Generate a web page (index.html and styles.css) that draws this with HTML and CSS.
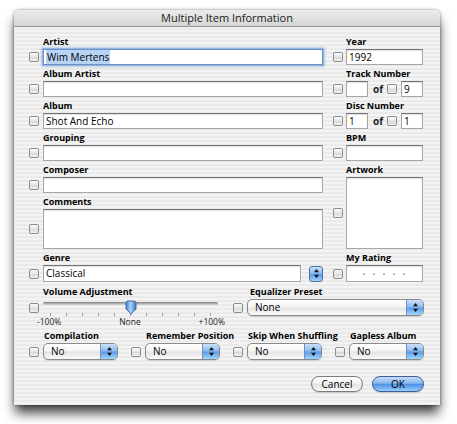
FILE: index.html
```html
<!DOCTYPE html>
<html>
<head>
<meta charset="utf-8">
<title>Multiple Item Information</title>
<link rel="stylesheet" href="styles.css">
</head>
<body>
<div class="win">
  <div class="titlebar">Multiple Item Information</div>
  <div class="content">
    <div class="cols">
      <div class="col left">
        <div class="fld"><div class="lbl">Artist</div><div class="ctl"><span class="cb"></span><div class="tf focus"><span class="sel">Wim Mertens</span></div></div></div>
        <div class="fld"><div class="lbl">Album Artist</div><div class="ctl"><span class="cb"></span><div class="tf"></div></div></div>
        <div class="fld"><div class="lbl">Album</div><div class="ctl"><span class="cb"></span><div class="tf">Shot And Echo</div></div></div>
        <div class="fld"><div class="lbl">Grouping</div><div class="ctl"><span class="cb"></span><div class="tf"></div></div></div>
        <div class="fld"><div class="lbl">Composer</div><div class="ctl"><span class="cb"></span><div class="tf"></div></div></div>
        <div class="fld"><div class="lbl">Comments</div><div class="ctl area"><span class="cb"></span><div class="tf"></div></div></div>
        <div class="fld"><div class="lbl">Genre</div><div class="ctl h17"><span class="cb"></span><div class="tf">Classical</div><span class="stepper"><svg width="5" height="9" viewBox="0 0 5 9"><path d="M2.5 0 L5 3.2 H0 Z M0 5.8 H5 L2.5 9 Z" fill="#111"/></svg></span></div></div>
      </div>
      <div class="col right">
        <div class="fld"><div class="lbl">Year</div><div class="ctl"><span class="cb"></span><div class="tf">1992</div></div></div>
        <div class="fld"><div class="lbl">Track Number</div><div class="ctl"><span class="cb"></span><div class="tf small"></div><span class="of">of</span><span class="cb"></span><div class="tf small gap">9</div></div></div>
        <div class="fld"><div class="lbl">Disc Number</div><div class="ctl"><span class="cb"></span><div class="tf small">1</div><span class="of">of</span><span class="cb"></span><div class="tf small gap">1</div></div></div>
        <div class="fld"><div class="lbl">BPM</div><div class="ctl"><span class="cb"></span><div class="tf"></div></div></div>
        <div class="fld"><div class="lbl">Artwork</div><div class="ctl art"><span class="cb"></span><div class="tf"></div></div></div>
        <div class="fld"><div class="lbl">My Rating</div><div class="ctl h17"><span class="cb"></span><div class="tf rating"><i></i><i></i><i></i><i></i><i></i></div></div></div>
      </div>
    </div>

    <div class="grid4 mid">
      <div class="vol">
        <div class="lbl">Volume Adjustment</div>
        <div class="volctl">
          <span class="cb"></span>
          <div class="sliderwrap">
            <div class="slider">
              <div class="track"></div>
              <svg class="knob" width="12" height="15" viewBox="0 0 12 15">
                <defs>
                  <linearGradient id="kg" x1="0" y1="0" x2="1" y2="0">
                    <stop offset="0" stop-color="#3f7fd6"/>
                    <stop offset="0.45" stop-color="#a9d2fb"/>
                    <stop offset="1" stop-color="#3a79d0"/>
                  </linearGradient>
                </defs>
                <path d="M1 3 Q1 1 3 1 H9 Q11 1 11 3 V9 L6 14 L1 9 Z" fill="url(#kg)" stroke="#41618f" stroke-width="0.9"/>
              </svg>
            </div>
            <div class="ticks"><i></i><i></i><i></i><i></i><i></i><i></i><i></i><i></i><i></i><i></i><i></i></div>
            <div class="vlabels"><span>-100%</span><span>None</span><span>+100%</span></div>
          </div>
        </div>
      </div>
      <div class="eq">
        <div class="lbl">Equalizer Preset</div>
        <div class="ctl h17"><span class="cb"></span><div class="popup"><span class="ptext">None</span><span class="parrow"><svg width="5" height="9" viewBox="0 0 5 9"><path d="M2.5 0 L5 3.2 H0 Z M0 5.8 H5 L2.5 9 Z" fill="#111"/></svg></span></div></div>
      </div>
    </div>

    <div class="grid4 bottom">
      <div class="grp">
        <div class="lbl">Compilation</div>
        <div class="ctl h17"><span class="cb"></span><div class="popup"><span class="ptext">No</span><span class="parrow"><svg width="5" height="9" viewBox="0 0 5 9"><path d="M2.5 0 L5 3.2 H0 Z M0 5.8 H5 L2.5 9 Z" fill="#111"/></svg></span></div></div>
      </div>
      <div class="grp">
        <div class="lbl">Remember Position</div>
        <div class="ctl h17"><span class="cb"></span><div class="popup"><span class="ptext">No</span><span class="parrow"><svg width="5" height="9" viewBox="0 0 5 9"><path d="M2.5 0 L5 3.2 H0 Z M0 5.8 H5 L2.5 9 Z" fill="#111"/></svg></span></div></div>
      </div>
      <div class="grp">
        <div class="lbl">Skip When Shuffling</div>
        <div class="ctl h17"><span class="cb"></span><div class="popup"><span class="ptext">No</span><span class="parrow"><svg width="5" height="9" viewBox="0 0 5 9"><path d="M2.5 0 L5 3.2 H0 Z M0 5.8 H5 L2.5 9 Z" fill="#111"/></svg></span></div></div>
      </div>
      <div class="grp">
        <div class="lbl">Gapless Album</div>
        <div class="ctl h17"><span class="cb"></span><div class="popup"><span class="ptext">No</span><span class="parrow"><svg width="5" height="9" viewBox="0 0 5 9"><path d="M2.5 0 L5 3.2 H0 Z M0 5.8 H5 L2.5 9 Z" fill="#111"/></svg></span></div></div>
      </div>
    </div>

    <div class="buttons">
      <span class="btn">Cancel</span>
      <span class="btn ok">OK</span>
    </div>
  </div>
</div>
</body>
</html>
```
FILE: styles.css
```css
html, body {
  height: 100%;
}

body {
  margin: 0;
  background: #ffffff;
  font-family: "Open Sans", "DejaVu Sans", sans-serif;
  color: #000;
}

.win {
  margin: 10px 0 0 14px;
  width: 426px;
  height: 395px;
  border-radius: 5px 5px 0 0;
  background: repeating-linear-gradient(to bottom, #f3f3f3 0, #f3f3f3 2px, #eaeaea 2px, #eaeaea 4px);
  box-shadow: 0 9px 12px -1px rgba(0, 0, 0, 0.75), 0 0 3px rgba(0, 0, 0, 0.5);
  display: flex;
  flex-direction: column;
}

.titlebar {
  height: 16px;
  line-height: 16px;
  border-bottom: 1px solid #939393;
  border-radius: 5px 5px 0 0;
  background: linear-gradient(to bottom, #ececec, #d5d5d5);
  text-align: center;
  font-size: 11px;
  color: #1a1a1a;
}

.content {
  padding: 9px 16px 0 15px;
}

.cols {
  display: flex;
  gap: 10px;
}

.left { width: 294px; }
.right { width: 90px; }

.fld {
  display: flex;
  flex-direction: column;
  margin-bottom: 3px;
}

.lbl {
  height: 13px;
  line-height: 12px;
  font-size: 9px;
  font-weight: 700;
  padding-left: 14px;
  white-space: nowrap;
  color: #000;
}

.right .lbl { padding-left: 13px; }

.ctl {
  display: flex;
  align-items: center;
  height: 16px;
  gap: 4px;
}

.right .ctl { gap: 3px; }

.ctl.h17 { height: 17px; }
.ctl.area { height: 40px; }
.ctl.art { height: 72px; }

.cb {
  flex: none;
  width: 10px;
  height: 10px;
  box-sizing: border-box;
  border: 1px solid #8d8d8d;
  border-radius: 2px;
  background: linear-gradient(to bottom, #fbfbfb, #e6e6e6 50%, #d9d9d9 55%, #f2f2f2);
}

.tf {
  flex: 1;
  align-self: stretch;
  box-sizing: border-box;
  background: #fff;
  border: 1px solid #a6a6a6;
  border-top-color: #727272;
  box-shadow: inset 0 1px 1px rgba(0, 0, 0, 0.12);
  font-size: 10px;
  line-height: 14px;
  padding-left: 2px;
  white-space: nowrap;
  overflow: hidden;
}

.h17 .tf { line-height: 15px; }

.tf.focus {
  border-color: #6d93c6;
  box-shadow: 0 0 0 1px #8fb4e2, 0 0 2px 2px rgba(120, 165, 225, 0.45);
}

.sel {
  background: #b7d4f6;
  padding: 0 1px;
}

.tf.small {
  flex: none;
  width: 22px;
}

.tf.small.gap { margin-left: 1px; }

.of {
  font-size: 10px;
  font-weight: 700;
  margin: 0 2px 0 2px;
  width: 9px;
  color: #222;
}

.stepper {
  flex: none;
  width: 14px;
  height: 16px;
  margin-left: 4px;
  box-sizing: border-box;
  border: 1px solid #4f70a3;
  border-radius: 3px;
  background: linear-gradient(to bottom, #c9e0f9, #86b8ef 48%, #5c9be6 52%, #9fd3fc);
  display: flex;
  align-items: center;
  justify-content: center;
}

.rating {
  display: flex;
  align-items: center;
  gap: 8px;
  padding-left: 16px;
}

.rating i {
  width: 2px;
  height: 2px;
  background: #b9b9b9;
}

.grid4 {
  display: grid;
  grid-template-columns: repeat(4, 89px);
  column-gap: 13px;
}

.mid { margin-top: 1px; }

.vol { grid-column: 1 / 3; }
.eq { grid-column: 3 / 5; }

.eq .lbl { padding-left: 17px; }
.grp .lbl { padding-left: 15px; }

.volctl {
  display: flex;
  gap: 4px;
  align-items: flex-start;
}

.volctl .cb { margin-top: 4px; }

.sliderwrap {
  width: 175px;
}

.slider {
  position: relative;
  height: 12px;
}

.track {
  position: relative;
  top: 3px;
  height: 3px;
  border-radius: 2px;
  background: linear-gradient(to bottom, #7f7f7f, #b5b5b5 60%, #d6d6d6);
}

.knob {
  position: absolute;
  left: 82px;
  top: 1px;
}

.ticks {
  height: 6px;
  box-sizing: border-box;
  padding: 2px 7px 0 7px;
  display: flex;
  justify-content: space-between;
}

.ticks i {
  width: 1px;
  height: 3px;
  background: #9c9c9c;
}

.vlabels {
  display: flex;
  justify-content: space-between;
  margin: 0 -7px 3px -6px;
  font-size: 8.5px;
  line-height: 10px;
  color: #222;
}

.popup {
  flex: 1;
  align-self: stretch;
  display: flex;
  box-sizing: border-box;
  border: 1px solid #898989;
  border-radius: 5px;
  overflow: hidden;
  background: linear-gradient(to bottom, #ffffff, #f3f3f3 48%, #e4e4e4 52%, #f9f9f9);
  box-shadow: 0 1px 1px rgba(0, 0, 0, 0.12);
}

.ptext {
  flex: 1;
  padding-left: 7px;
  font-size: 10px;
  line-height: 15px;
}

.parrow {
  flex: none;
  width: 16px;
  border-left: 1px solid #6f90c0;
  background: linear-gradient(to bottom, #cbe1f9, #88b9ef 48%, #5a99e5 52%, #a2d5fc);
  display: flex;
  align-items: center;
  justify-content: center;
}

.buttons {
  display: flex;
  justify-content: flex-end;
  gap: 9px;
  margin-top: 16px;
}

.btn {
  width: 52px;
  height: 16px;
  box-sizing: border-box;
  border: 1px solid #7c7c7c;
  border-radius: 8px;
  text-align: center;
  font-size: 10px;
  line-height: 14px;
  background: linear-gradient(to bottom, #ffffff, #f2f2f2 45%, #e1e1e1 52%, #fbfbfb);
  box-shadow: 0 1px 1px rgba(0, 0, 0, 0.15);
}

.btn.ok {
  border-color: #3d5e95;
  background: linear-gradient(to bottom, #c6ddf8, #85b7ef 45%, #4f91e5 52%, #93cdfb);
}
```
